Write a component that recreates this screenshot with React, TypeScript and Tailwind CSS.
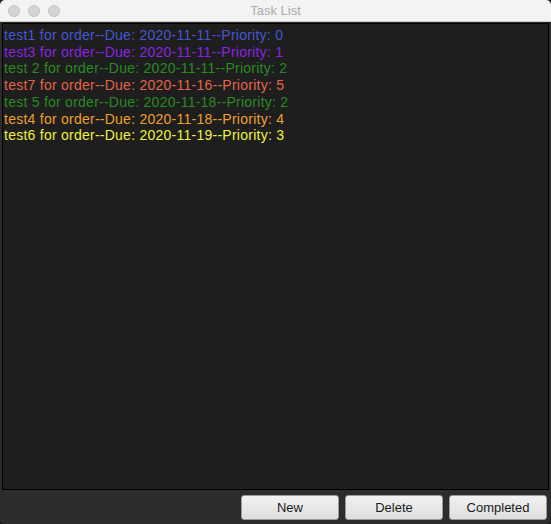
const tasks = [
  { text: 'test1 for order--Due: 2020-11-11--Priority: 0', color: 'text-[#4656d2]' },
  { text: 'test3 for order--Due: 2020-11-11--Priority: 1', color: 'text-[#8a24e0]' },
  { text: 'test 2 for order--Due: 2020-11-11--Priority: 2', color: 'text-[#2a8a22]' },
  { text: 'test7 for order--Due: 2020-11-16--Priority: 5', color: 'text-[#e5654a]' },
  { text: 'test 5 for order--Due: 2020-11-18--Priority: 2', color: 'text-[#2a8a22]' },
  { text: 'test4 for order--Due: 2020-11-18--Priority: 4', color: 'text-[#f0a027]' },
  { text: 'test6 for order--Due: 2020-11-19--Priority: 3', color: 'text-[#f2f23a]' },
];

export default function App() {
  return (
    <div className="w-[551px] h-[524px] bg-[#1a1a1a] font-['Liberation_Sans',Arial,sans-serif]">
      <div className="w-full h-full flex flex-col rounded-[5px] overflow-hidden bg-[#2d2d2d]">
        {/* title bar */}
        <div className="h-[22px] shrink-0 bg-[#f3f3f3] border-b border-[#c8c8c8] flex items-center relative">
          <div className="flex items-center gap-[8px] pl-[8px]">
            <div className="w-[12px] h-[12px] rounded-full bg-[#d4d4d4] border border-[#c4c4c4]" />
            <div className="w-[12px] h-[12px] rounded-full bg-[#d4d4d4] border border-[#c4c4c4]" />
            <div className="w-[12px] h-[12px] rounded-full bg-[#d4d4d4] border border-[#c4c4c4]" />
          </div>
          <div className="absolute inset-0 flex items-center justify-center text-[13px] text-[#ababab]">
            Task List
          </div>
        </div>

        {/* list */}
        <div className="flex-1 px-[2px] pt-[1px] flex flex-col">
          <div className="flex-1 bg-[#1e1e1e] border border-black pt-[3px] pl-[1px]">
            {tasks.map((t) => (
              <div key={t.text} className={`text-[14px] leading-[16.7px] tracking-[0.25px] whitespace-nowrap ${t.color}`}>
                {t.text}
              </div>
            ))}
          </div>
        </div>

        {/* buttons */}
        <div className="h-[34px] shrink-0 flex items-start justify-end gap-[6px] pr-[4px] pt-[5px]">
          {['New', 'Delete', 'Completed'].map((b) => (
            <button
              key={b}
              className="w-[98px] h-[25px] rounded-[3px] border border-[#9a9a9a] bg-gradient-to-b from-[#f2f2f2] to-[#dedede] text-[13px] text-[#1a1a1a]"
            >
              {b}
            </button>
          ))}
        </div>
      </div>
    </div>
  );
}
